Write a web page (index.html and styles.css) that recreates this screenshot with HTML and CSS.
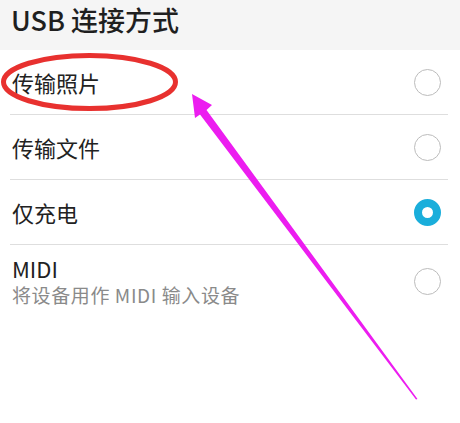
FILE: index.html
```html
<!DOCTYPE html>
<html lang="zh-CN">
<head>
    <meta charset="UTF-8">
    <meta name="viewport" content="width=device-width, initial-scale=1.0">
    <title>USB 连接方式</title>
    <link rel="stylesheet" href="styles.css">
</head>
<body>
    <div class="screen">
        <div class="title-bar">USB 连接方式</div>
        <ul class="options">
            <li class="option">
                <div class="label">传输照片</div>
                <span class="radio"></span>
            </li>
            <li class="option">
                <div class="label">传输文件</div>
                <span class="radio"></span>
            </li>
            <li class="option">
                <div class="label">仅充电</div>
                <span class="radio checked"></span>
            </li>
            <li class="option option-tall">
                <div class="label">
                    <div class="name">MIDI</div>
                    <div class="hint">将设备用作 MIDI 输入设备</div>
                </div>
                <span class="radio"></span>
            </li>
        </ul>

        <!-- hand drawn marks on top of the screenshot -->
        <svg class="marks" width="460" height="423" viewBox="0 0 460 423">
            <ellipse cx="89.5" cy="82" rx="86" ry="26.5" fill="none" stroke="#e8312f" stroke-width="5"/>
            <polygon fill="#ec1df0" points="192,94 212,105 206.5,110 417.5,399 416,399.5 200,114.5 195,118"/>
        </svg>
    </div>
</body>
</html>
```
FILE: styles.css
```css
body {
    margin: 0;
    background-color: #ffffff;
    font-family: "Noto Sans CJK SC", "Noto Sans", sans-serif;
    color: #222;
}
.screen {
    position: relative;
    width: 460px;
    height: 423px;
    overflow: hidden;
}
.title-bar {
    height: 50px;
    background-color: #f5f5f5;
    padding-left: 11px;
    font-size: 27px;
    font-weight: 500;
    line-height: 40px;
    color: #1f1f1f;
}
.options {
    list-style: none;
    margin: 0 12px 0 10px;
    padding: 0;
}
.option {
    display: flex;
    align-items: center;
    justify-content: space-between;
    height: 64px;
    padding: 0 7px 0 2px;
    border-bottom: 1px solid #dedede;
}
.option-tall {
    height: 72px;
    border-bottom: none;
}
.label {
    font-size: 22px;
    line-height: 30px;
}
.name {
    font-size: 22px;
    line-height: 28px;
}
.hint {
    font-size: 19px;
    line-height: 26px;
    color: #8a8a8a;
    letter-spacing: 0.6px;
}
.radio {
    box-sizing: border-box;
    width: 27px;
    height: 27px;
    border-radius: 50%;
    border: 1.5px solid #bcbcbc;
}
.radio.checked {
    border: 8.5px solid #1aaedb;
}
.marks {
    position: absolute;
    left: 0;
    top: 0;
}
```
